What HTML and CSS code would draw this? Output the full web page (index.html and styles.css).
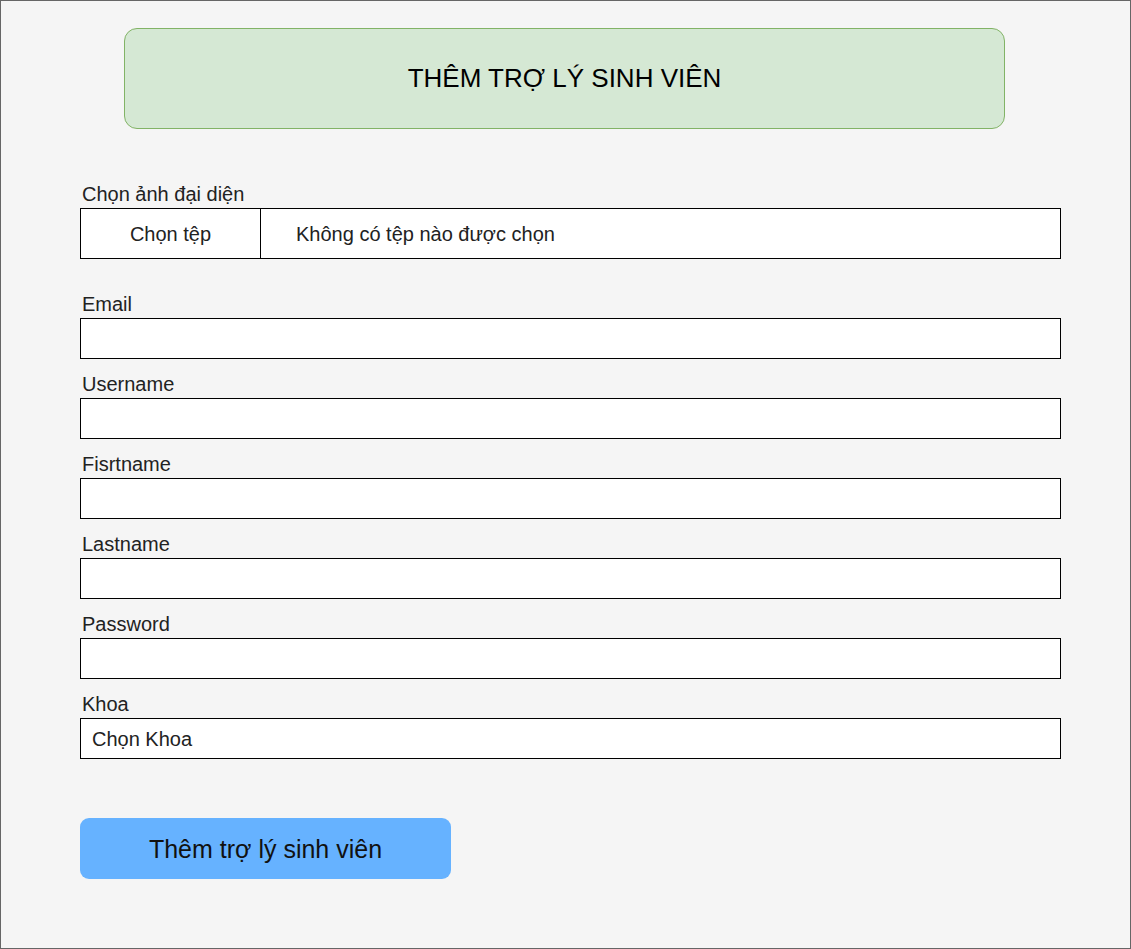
FILE: index.html
```html
<!DOCTYPE html>
<html lang="vi">
<head>
<meta charset="utf-8">
<title>Thêm trợ lý sinh viên</title>
<link rel="stylesheet" href="styles.css">
</head>
<body>
<div class="page">
  <div class="header">THÊM TRỢ LÝ SINH VIÊN</div>
  <form class="form">
    <div class="label first">Chọn ảnh đại diện</div>
    <div class="file">
      <div class="file-btn">Chọn tệp</div>
      <div class="file-name">Không có tệp nào được chọn</div>
    </div>
    <div class="label gap-file">Email</div>
    <div class="input"></div>
    <div class="label">Username</div>
    <div class="input"></div>
    <div class="label">Fisrtname</div>
    <div class="input"></div>
    <div class="label">Lastname</div>
    <div class="input"></div>
    <div class="label">Password</div>
    <div class="input"></div>
    <div class="label">Khoa</div>
    <div class="input select">Chọn Khoa</div>
    <div class="submit">Thêm trợ lý sinh viên</div>
  </form>
</div>
</body>
</html>
```

FILE: styles.css
```css
* { box-sizing: border-box; }
html, body { margin: 0; padding: 0; }
body { font-family: "Liberation Sans", Arial, sans-serif; }
.page {
  width: 1131px;
  height: 949px;
  border: 1px solid #666666;
  background: #f5f5f5;
  padding-top: 27px;
}
.header {
  margin-left: 123px;
  width: 881px;
  height: 101px;
  border: 1px solid #82b366;
  border-radius: 13px;
  background: #d5e8d4;
  display: flex;
  align-items: center;
  justify-content: center;
  font-size: 26px;
  color: #000;
  padding-bottom: 1px;
}
.form {
  margin: 0 0 0 79px;
  width: 981px;
  display: flex;
  flex-direction: column;
}
.label {
  font-size: 20px;
  line-height: 20px;
  height: 20px;
  color: #222;
  padding-left: 2px;
  margin-top: 15px;
  margin-bottom: 4px;
}
.label.first { margin-top: 55px; margin-bottom: 4px; }
.label.gap-file { margin-top: 35px; }
.file {
  height: 51px;
  border: 1px solid #000;
  background: #fff;
  display: flex;
  font-size: 20px;
  color: #222;
}
.file-btn {
  width: 180px;
  border-right: 1px solid #000;
  display: flex;
  align-items: center;
  justify-content: center;
  padding-top: 1px;
}
.file-name {
  display: flex;
  align-items: center;
  padding-left: 35px;
  padding-top: 1px;
}
.input {
  height: 41px;
  border: 1px solid #000;
  background: #fff;
}
.select {
  display: flex;
  align-items: center;
  padding-left: 11px;
  padding-top: 1px;
  font-size: 20px;
  color: #222;
}
.submit {
  margin-top: 59px;
  width: 371px;
  height: 61px;
  border-radius: 9px;
  background: #66b2ff;
  display: flex;
  align-items: center;
  justify-content: center;
  font-size: 25px;
  color: #111;
  padding-top: 1px;
}
```
